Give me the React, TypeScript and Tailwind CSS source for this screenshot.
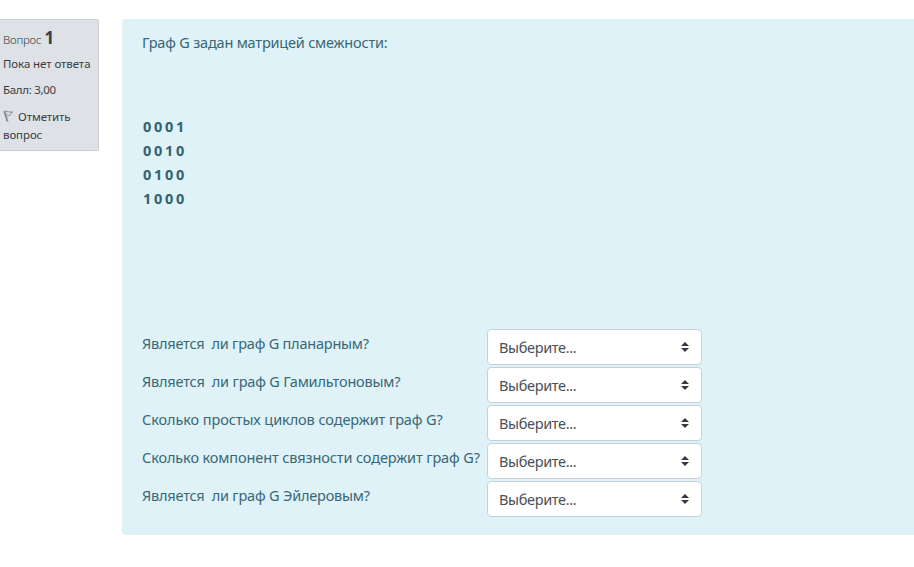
const questions = [
  { text: "Является\u00a0 ли граф G планарным?", tracking: "tracking-[-0.22px]" },
  { text: "Является\u00a0 ли граф G Гамильтоновым?", tracking: "tracking-[-0.19px]" },
  { text: "Сколько простых циклов содержит граф G?", tracking: "tracking-[-0.09px]" },
  { text: "Сколько компонент связности содержит граф G?", tracking: "tracking-[-0.12px]" },
  { text: "Является\u00a0 ли граф G Эйлеровым?", tracking: "tracking-[-0.2px]" },
];

const matrix = ["0001", "0010", "0100", "1000"];

function FlagIcon() {
  return (
    <svg width="11" height="12" viewBox="0 0 11 12" className="mr-1 inline-block align-[-1px]" fill="none" stroke="#85898d" strokeWidth="1">
      <path d="M1.2 1.2 L4.6 11.5" strokeWidth="1.8" />
      <path d="M1 1.5 C3 .3 4.5 2.6 9.8 2 C8 3.2 7.5 4 6.8 5.6 C5 5.2 4 5.6 2.8 6.5" />
      <path d="M3 2.5 L4.5 5.4" stroke="#b2b5b8" />
    </svg>
  );
}

function SelectBox() {
  return (
    <button className="flex h-9 w-[215px] items-center justify-between rounded-[4px] border border-[#c5d2d9] bg-white pr-3 pl-[11px] text-left text-[14.5px] text-[#495057]">
      <span className="-mt-px tracking-[-0.35px]">Выберите...</span>
      <svg width="8" height="10" viewBox="0 0 8 10" className="-mt-px" fill="#343a40">
        <path d="M0 4 L4 0 L8 4 Z M0 6 L4 10 L8 6 Z" />
      </svg>
    </button>
  );
}

export default function App() {
  return (
    <div className="flex h-[567px] w-[914px] items-start overflow-hidden bg-white pt-[19px] font-['Noto_Sans',sans-serif]">
      <aside className="h-[132px] w-[99px] shrink-0 rounded-r-[2px] border border-l-0 border-[#cacdd2] bg-[#dee2e6] pt-[5px] pl-[3px] text-[11.5px] leading-[18px] text-[#373d43]">
        <h3 className="h-[26px] whitespace-nowrap leading-[26px]">
          <span className="font-light tracking-[-0.2px]">Вопрос</span>{" "}
          <span className="text-[17px] font-bold">1</span>
        </h3>
        <p className="mt-1 whitespace-nowrap tracking-[-0.08px]">Пока нет ответа</p>
        <p className="mt-2 tracking-[-0.3px]">Балл: 3,00</p>
        <p className="mt-[9px] tracking-[-0.1px]">
          <FlagIcon />
          Отметить
          <br />
          вопрос
        </p>
      </aside>
      <main className="ml-[23px] h-[516px] w-[792px] rounded-l-[4px] bg-[#def2f8] pt-[11px] pl-5 text-[14.5px] leading-6 text-[#3a6775]">
        <p className="tracking-[-0.2px]">Граф G задан матрицей смежности:</p>
        <div className="mt-[60px] ml-px font-bold tracking-[2.7px] text-[#34616f]">
          {matrix.map((row) => (
            <p key={row}>{row}</p>
          ))}
        </div>
        <div className="mt-[119px] flex flex-col gap-0.5">
          {questions.map((q) => (
            <div key={q.text} className="flex h-9 items-start">
              <p className={`w-[345px] shrink-0 pt-[2px] whitespace-nowrap ${q.tracking}`}>{q.text}</p>
              <SelectBox />
            </div>
          ))}
        </div>
      </main>
    </div>
  );
}
